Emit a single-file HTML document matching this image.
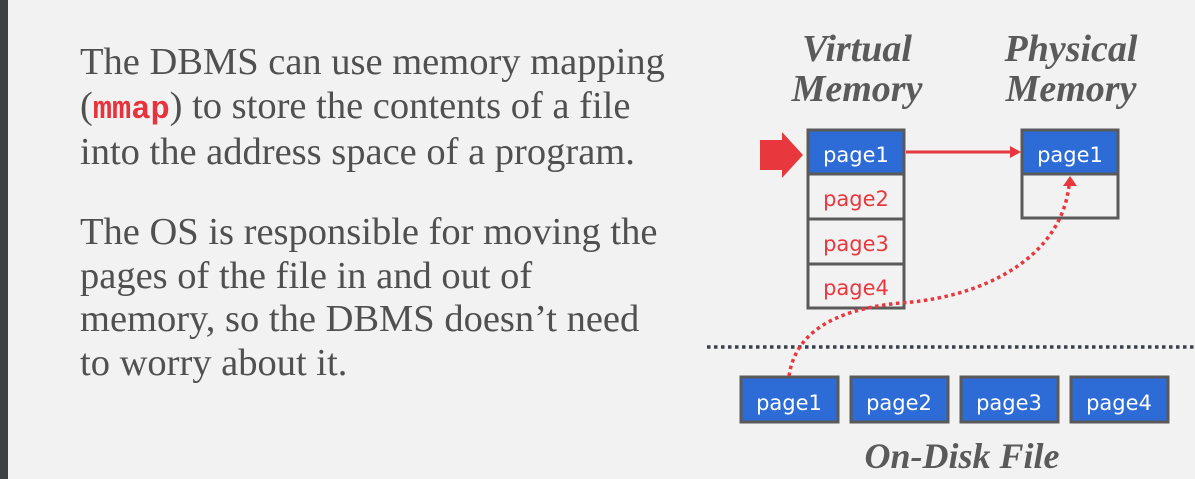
<!DOCTYPE html>
<html><head><meta charset="utf-8"><style>
html,body{margin:0;padding:0;}
body{width:1195px;height:479px;background:#f2f2f2;position:relative;overflow:hidden;font-family:"Liberation Serif",serif;}
.bar{position:absolute;left:0;top:0;width:8px;height:479px;background:#3d4044;}
.txt{position:absolute;left:80px;color:#505050;font-size:38.5px;line-height:43.5px;white-space:nowrap;}
.code{font-family:"Liberation Mono",monospace;font-weight:bold;color:#e8323c;font-size:32px;}
</style></head><body>
<div class="bar"></div>
<div class="txt" style="top:41px">The DBMS can use memory mapping<br>(<span class="code">mmap</span>) to store the contents of a file<br>into the address space of a program.</div>
<div class="txt" style="top:211px">The OS is responsible for moving the<br>pages of the file in and out of<br>memory, so the DBMS doesn’t need<br>to worry about it.</div>
<svg width="1195" height="479" style="position:absolute;left:0;top:0" font-family="'DejaVu Sans',sans-serif">
<g font-family="'Liberation Serif',serif" font-style="italic" font-weight="bold" fill="#5a5a5a" font-size="38" text-anchor="middle">
<text x="857" y="61">Virtual</text><text x="857" y="101">Memory</text>
<text x="1071" y="61">Physical</text><text x="1071" y="101">Memory</text>
<text x="962" y="468" font-size="36">On-Disk File</text>
</g>
<polygon points="760,140 782,140 782,132 803,155 782,178 782,170 760,170" fill="#e8383e"/>
<g stroke="#5a5a5a" stroke-width="3">
<rect x="808" y="130" width="96" height="44" fill="#2d6bd6"/>
<rect x="808" y="174" width="96" height="45" fill="#f2f2f2"/>
<rect x="808" y="219" width="96" height="45" fill="#f2f2f2"/>
<rect x="808" y="264" width="96" height="44" fill="#f2f2f2"/>
<rect x="1022" y="130" width="96" height="44" fill="#2d6bd6"/>
<rect x="1022" y="174" width="96" height="44" fill="#f2f2f2"/>
<rect x="741" y="377" width="97" height="45" fill="#2d6bd6"/>
<rect x="851" y="377" width="97" height="45" fill="#2d6bd6"/>
<rect x="961" y="377" width="97" height="45" fill="#2d6bd6"/>
<rect x="1071" y="377" width="97" height="45" fill="#2d6bd6"/>
</g>
<g font-size="21" text-anchor="middle">
<text x="856" y="162" fill="#fff">page1</text>
<text x="856" y="206" fill="#e8383e">page2</text>
<text x="856" y="251" fill="#e8383e">page3</text>
<text x="856" y="295" fill="#e8383e">page4</text>
<text x="1070" y="162" fill="#fff">page1</text>
<text x="789" y="410" fill="#fff">page1</text>
<text x="899" y="410" fill="#fff">page2</text>
<text x="1009" y="410" fill="#fff">page3</text>
<text x="1119" y="410" fill="#fff">page4</text>
</g>
<line x1="906" y1="152" x2="1012" y2="152" stroke="#e8383e" stroke-width="3"/>
<polygon points="1010,146 1021,152 1010,158" fill="#e8383e"/>
<line x1="707" y1="347" x2="1195" y2="347" stroke="#3a3f4a" stroke-width="3.5" stroke-dasharray="3.5,3.5"/>
<path d="M789,376 C795,335 830,310 900,303 C980,298 1060,260 1069,186" fill="none" stroke="#e8383e" stroke-width="3.5" stroke-dasharray="3.5,3.5"/>
<polygon points="1063,186 1070,176 1077,186" fill="#e8383e"/>
</svg>
</body></html>
